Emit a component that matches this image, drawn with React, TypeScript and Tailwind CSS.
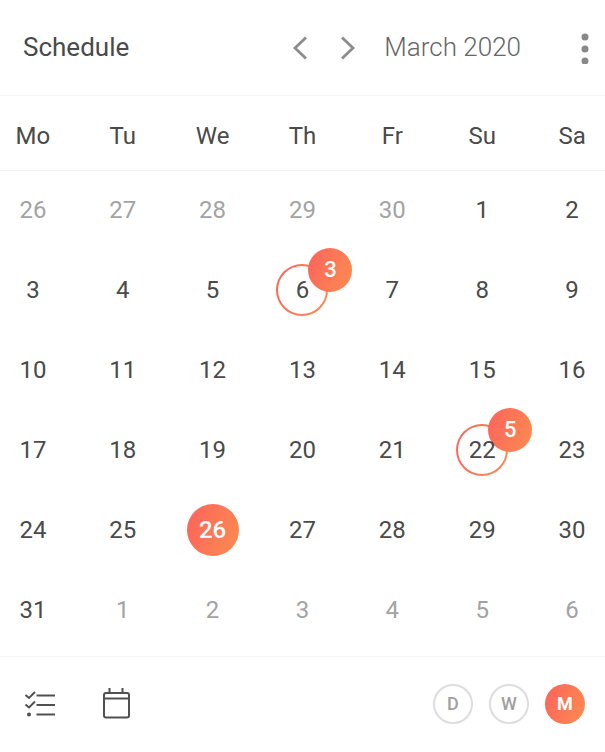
import React from "react";

type Day = { label: number; muted?: boolean; selected?: boolean; events?: number };

const weekdays = ["Mo", "Tu", "We", "Th", "Fr", "Su", "Sa"];

const leading: Day[] = [26, 27, 28, 29, 30].map((label) => ({ label, muted: true }));
const current: Day[] = Array.from({ length: 31 }, (_, i) => {
  const label = i + 1;
  const events = label === 6 ? 3 : label === 22 ? 5 : undefined;
  return { label, events, selected: label === 26 };
});
const trailing: Day[] = [1, 2, 3, 4, 5, 6].map((label) => ({ label, muted: true }));
const days = [...leading, ...current, ...trailing];
const weeks = Array.from({ length: 6 }, (_, i) => days.slice(i * 7, i * 7 + 7));

const gradient = "bg-linear-[110deg] from-[#fc635c] to-[#fd8c50]";

function DayCell({ day }: { day: Day }) {
  const tone = day.selected
    ? `${gradient} font-medium text-white`
    : day.muted
      ? "text-[#a3a3a3]"
      : "text-[#4a4a4a]";
  return (
    <button
      type="button"
      aria-pressed={!!day.selected}
      className={`relative mx-auto flex size-13 items-center justify-center rounded-full ${tone}`}
    >
      {day.events && (
        <>
          <span className={`absolute inset-0 rounded-full p-0.5 ${gradient}`}>
            <span className="block size-full rounded-full bg-white" />
          </span>
          <span
            className={`absolute -top-4 left-8 flex size-11 items-center justify-center rounded-full text-[22px] font-medium text-white ${gradient}`}
          >
            {day.events}
          </span>
        </>
      )}
      <span className="relative">{day.label}</span>
    </button>
  );
}

function ViewButton({ label, name, active }: { label: string; name: string; active?: boolean }) {
  return (
    <button
      type="button"
      aria-label={name}
      aria-pressed={!!active}
      className={`flex size-10 items-center justify-center rounded-full text-lg ${
        active ? `${gradient} font-bold text-white` : "border-2 border-[#dddddd] font-medium text-[#a0a0a0]"
      }`}
    >
      {label}
    </button>
  );
}

export default function App() {
  return (
    <main className="min-h-screen overflow-hidden bg-white font-[Roboto,sans-serif] text-[#4a4a4a]">
      <header className="flex h-24 items-center border-b border-[#f5f5f5] pr-4 pl-[23px]">
        <h1 className="flex-1 text-[26px]">Schedule</h1>
        <div className="flex items-center">
          <button type="button" aria-label="Previous month">
            <svg className="h-6 w-4" viewBox="0 0 16 24" fill="none" stroke="#8c8c8c" strokeWidth="2.8">
              <path d="M14 1.500 3 12l11 10.500" />
            </svg>
          </button>
          <button type="button" aria-label="Next month" className="ml-8">
            <svg className="h-6 w-4" viewBox="0 0 16 24" fill="none" stroke="#8c8c8c" strokeWidth="2.8">
              <path d="M2 1.500 13 12 2 22.500" />
            </svg>
          </button>
          <span className="ml-7 text-[26px] font-light text-[#666666]">March 2020</span>
          <button type="button" aria-label="More options" className="ml-15">
            <svg className="h-8 w-2" viewBox="0 0 8 32" fill="#888888">
              <circle cx="4" cy="5" r="3.500" />
              <circle cx="4" cy="17" r="3.500" />
              <circle cx="4" cy="29" r="3.500" />
            </svg>
          </button>
        </div>
      </header>

      <div className="border-b border-[#f5f5f5] pb-1.5">
        <div className="-mx-3">
          <table className="w-full table-fixed border-collapse text-center text-2xl">
            <thead>
              <tr className="h-[74px] border-b border-[#f5f5f5]">
                {weekdays.map((name) => (
                  <th key={name} scope="col" className="p-0 pt-1.5 font-normal">
                    {name}
                  </th>
                ))}
              </tr>
            </thead>
            <tbody>
              {weeks.map((week, i) => (
                <tr key={i} className="h-20">
                  {week.map((day, j) => (
                    <td key={j} className="p-0">
                      <DayCell day={day} />
                    </td>
                  ))}
                </tr>
              ))}
            </tbody>
          </table>
        </div>
      </div>

      <footer className="flex h-[94px] items-center justify-between pr-5 pl-6">
        <div className="flex items-center gap-11">
          <button type="button" aria-label="Task list">
            <svg className="size-8" viewBox="0 0 32 32" fill="none" stroke="#505050" strokeWidth="2">
              <path d="M1.500 7 5 10 11 4M1.500 16.500 5 19.500 11 13.500" />
              <path d="M12.500 7.500H31M12.500 17H31M12.500 26.500H31" />
              <circle cx="5" cy="26.500" r="2" fill="#505050" stroke="none" />
            </svg>
          </button>
          <button type="button" aria-label="Calendar">
            <svg className="size-8" viewBox="0 0 32 32" fill="none" stroke="#505050" strokeWidth="2">
              <rect x="4" y="5" width="25" height="24.500" rx="2" />
              <path d="M4 10.500H29M9.500 0V5M22.500 0V5" />
            </svg>
          </button>
        </div>
        <div className="flex gap-4">
          <ViewButton label="D" name="Day view" />
          <ViewButton label="W" name="Week view" />
          <ViewButton label="M" name="Month view" active />
        </div>
      </footer>
    </main>
  );
}
